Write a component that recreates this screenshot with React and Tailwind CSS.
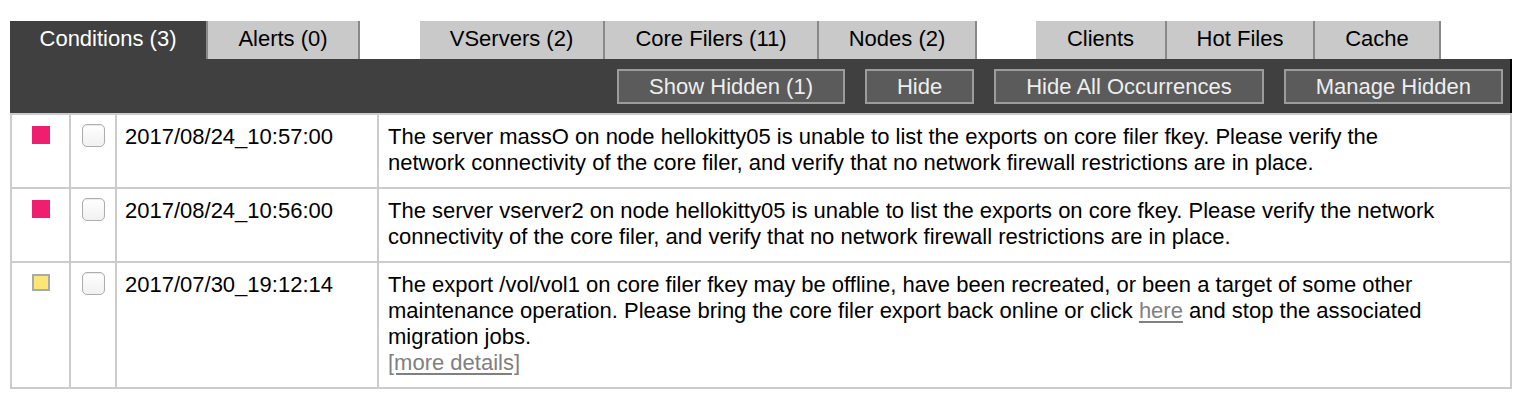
import { useState } from "react";

const tabs = [
  { label: "Conditions (3)", w: "w-[198px]", active: true },
  { label: "Alerts (0)", w: "w-[152px]" },
  { spacer: true, w: "w-[60px]" },
  { label: "VServers (2)", w: "w-[185px]" },
  { label: "Core Filers (11)", w: "w-[214px]" },
  { label: "Nodes (2)", w: "w-[158px]" },
  { spacer: true, w: "w-[59px]" },
  { label: "Clients", w: "w-[131px]" },
  { label: "Hot Files", w: "w-[148px]" },
  { label: "Cache", w: "w-[126px]" },
];

const actions = ["Show Hidden (1)", "Hide", "Hide All Occurrences", "Manage Hidden"];

const rows = [
  {
    level: "critical",
    time: "2017/08/24_10:57:00",
    text: "The server massO on node hellokitty05 is unable to list the exports on core filer fkey. Please verify the network connectivity of the core filer, and verify that no network firewall restrictions are in place.",
  },
  {
    level: "critical",
    time: "2017/08/24_10:56:00",
    text: "The server vserver2 on node hellokitty05 is unable to list the exports on core fkey. Please verify the network connectivity of the core filer, and verify that no network firewall restrictions are in place.",
  },
  {
    level: "warning",
    time: "2017/07/30_19:12:14",
    text: null,
  },
];

function Checkbox({ checked, onChange }) {
  return (
    <button
      onClick={onChange}
      className="w-[23px] h-[23px] rounded-[5px] border border-[#adadad] bg-gradient-to-b from-white to-[#f1f1f1] shadow-[inset_0_1px_1px_rgba(0,0,0,0.08)] flex items-center justify-center text-[14px] leading-none text-[#333]"
    >
      {checked ? "✓" : ""}
    </button>
  );
}

export default function App() {
  const [checked, setChecked] = useState({});

  return (
    <div className="w-[1522px] h-[410px] bg-white font-['Liberation_Sans',Arial,sans-serif] text-black pt-[21px] pl-[10px]">
      {/* tabs */}
      <div className="flex h-[38px]">
        {tabs.map((t, i) =>
          t.spacer ? (
            <div key={i} className={t.w} />
          ) : (
            <div
              key={i}
              className={`${t.w} flex items-center justify-center pb-[3px] text-[22px] border-r-2 border-[#898989] ${
                t.active ? "bg-[#404040] text-white" : "bg-[#c9c9c9] text-black"
              }`}
            >
              {t.label}
            </div>
          )
        )}
      </div>

      {/* toolbar */}
      <div className="w-[1502px] h-[54px] bg-[#404040] border-r-2 border-black flex items-center justify-end gap-[20px] pr-[7px] pt-px">
        {actions.map((a) => (
          <button
            key={a}
            className="h-[35px] px-[30px] bg-[#5b5b5b] border-2 border-[#9c9c9c] text-[#eeeeee] text-[22px] leading-none"
          >
            {a}
          </button>
        ))}
      </div>

      {/* conditions table */}
      <table className="w-[1502px] border-collapse text-[22px] leading-[26px]">
        <colgroup>
          <col className="w-[59px]" />
          <col className="w-[46px]" />
          <col className="w-[262px]" />
          <col />
        </colgroup>
        <tbody>
          {rows.map((r, i) => (
            <tr key={i}>
              <td className="border-2 border-[#cccccc] align-top pt-[11px]">
                <div className="flex justify-center">
                  {r.level === "critical" ? (
                    <div className="w-[18px] h-[18px] bg-[#f01e6e]" />
                  ) : (
                    <div className="w-[18px] h-[17px] bg-[#fde675] border-2 border-[#a9a9a9]" />
                  )}
                </div>
              </td>
              <td className="border-2 border-[#cccccc] align-top pt-[9px]">
                <div className="flex justify-center">
                  <Checkbox
                    checked={!!checked[i]}
                    onChange={() => setChecked((p) => ({ ...p, [i]: !p[i] }))}
                  />
                </div>
              </td>
              <td className="border-2 border-[#cccccc] align-top pt-[9px] pl-[8px]">
                {r.time}
              </td>
              <td className="border-2 border-[#cccccc] align-top pt-[9px] pb-[11px] pl-[9px] pr-[60px]">
                {r.text ? (
                  r.text
                ) : (
                  <>
                    The export /vol/vol1 on core filer fkey may be offline, have been recreated, or been a
                    target of some other maintenance operation. Please bring the core filer export back
                    online or click{" "}
                    <a href="#" className="text-[#808080] underline decoration-2 underline-offset-[3px]">
                      here
                    </a>{" "}
                    and stop the associated migration jobs.
                    <div>
                      <a href="#" className="text-[#808080] underline decoration-2 underline-offset-[3px]">
                        [more details]
                      </a>
                    </div>
                  </>
                )}
              </td>
            </tr>
          ))}
        </tbody>
      </table>
    </div>
  );
}
